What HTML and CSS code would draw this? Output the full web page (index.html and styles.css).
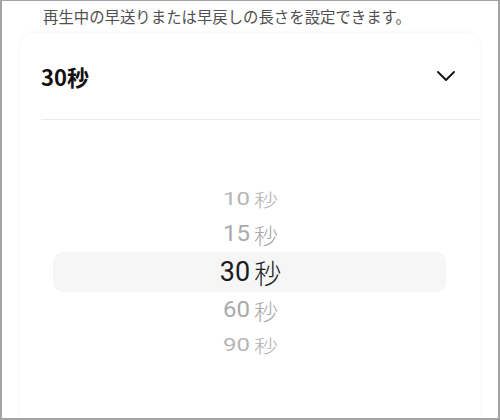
FILE: index.html
```html
<!DOCTYPE html>
<html>
<head>
    <meta charset="UTF-8">
    <link rel="stylesheet" href="styles.css">
</head>
<body>
    <div class="frame">
        <p class="desc">再生中の早送りまたは早戻しの長さを設定できます。</p>
        <div class="card">
            <div class="header">
                <span class="current">30秒</span>
                <svg class="chevron" width="18" height="10" viewBox="0 0 18 10">
                    <path d="M1 1 L9 9 L17 1" fill="none" stroke="#111" stroke-width="1.8" stroke-linecap="round" stroke-linejoin="round"/>
                </svg>
            </div>
            <div class="divider"></div>
            <div class="picker">
                <div class="item far"><span class="num">10</span><span class="unit">秒</span></div>
                <div class="item near"><span class="num">15</span><span class="unit">秒</span></div>
                <div class="item selected"><span class="num">30</span><span class="unit">秒</span></div>
                <div class="item near"><span class="num">60</span><span class="unit">秒</span></div>
                <div class="item far"><span class="num">90</span><span class="unit">秒</span></div>
            </div>
        </div>
    </div>
</body>
</html>
```

FILE: styles.css
```css
html, body {
    margin: 0;
    padding: 0;
}

body {
    background-color: #ffffff;
    font-family: "Noto Sans CJK JP", "Noto Sans", sans-serif;
}

.frame {
    box-sizing: border-box;
    width: 500px;
    height: 420px;
    border: 2px solid #a3a3a3;
    border-top-width: 1px;
    overflow: hidden;
    padding: 0 18px 0 18px;
}

.desc {
    margin: 0;
    padding: 5px 0 0 23px;
    font-size: 15.4px;
    line-height: 21px;
    color: #505050;
}

.card {
    margin-top: 6px;
    height: 420px;
    background-color: #ffffff;
    border-radius: 14px;
    box-shadow: 0 0 4px rgba(0, 0, 0, 0.06);
    padding-left: 21px;
}

.header {
    display: flex;
    align-items: center;
    justify-content: space-between;
    height: 86px;
    padding-right: 25px;
}

.current {
    font-size: 22px;
    font-weight: bold;
    color: #111111;
}

.chevron {
    display: block;
}

.divider {
    height: 1px;
    background-color: #e9e9e9;
}

.picker {
    margin: 62px 34px 0 12px;
    display: flex;
    flex-direction: column;
}

.item {
    display: flex;
    align-items: center;
    justify-content: center;
    gap: 4px;
    font-family: "Roboto", "Noto Sans CJK JP", sans-serif;
}

.item .num {
    padding-left: 2px;
}

.item .unit {
    font-family: "Noto Sans CJK JP", sans-serif;
    font-weight: 300;
}

.item.far {
    height: 34px;
    font-size: 24px;
    color: #b4b4b4;
    transform: scaleY(0.75);
}

.item.near {
    height: 36px;
    font-size: 24px;
    color: #a9a9a9;
    transform: scaleY(0.9);
}

.item.selected {
    height: 40px;
    font-size: 27px;
    color: #1c1c1c;
    background-color: #f6f6f6;
    border-radius: 10px;
}
```
